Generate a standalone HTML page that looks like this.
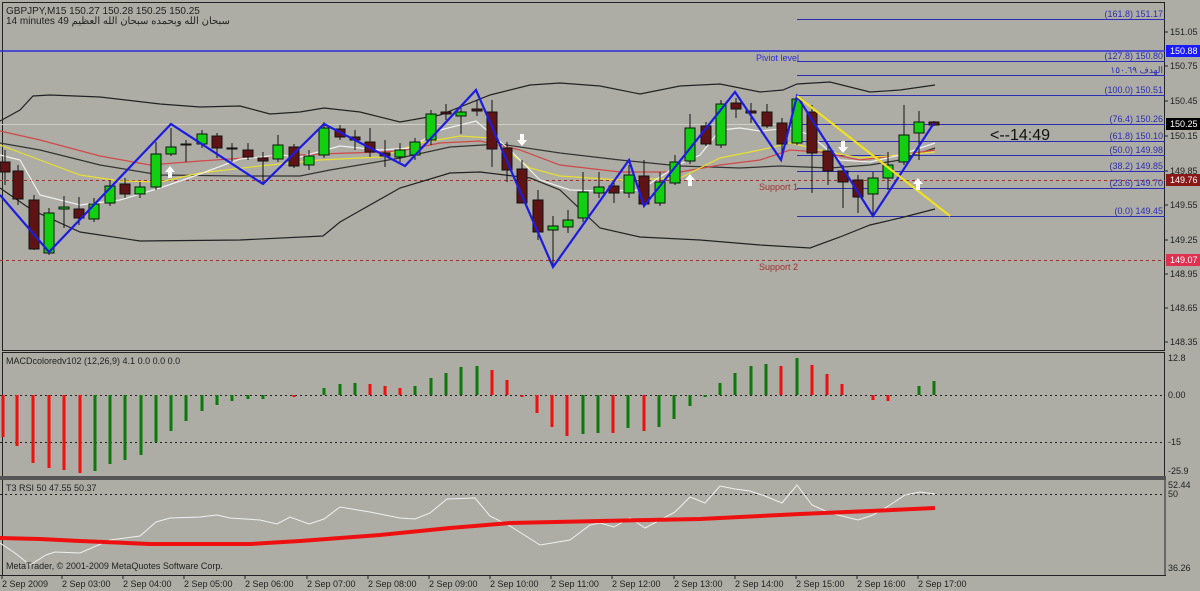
<!DOCTYPE html>
<html><head><meta charset="utf-8"><style>
html,body{margin:0;padding:0;background:#adada5;}
svg{display:block;font-family:"Liberation Sans","Noto Sans CJK SC",sans-serif;}
</style></head><body>
<svg width="1200" height="591" viewBox="0 0 1200 591" xmlns="http://www.w3.org/2000/svg">
<rect width="1200" height="591" fill="#adada5"/>
<!-- frames -->
<rect x="2.5" y="2.5" width="1162" height="348" fill="none" stroke="#222" stroke-width="1"/>
<rect x="2.5" y="352.5" width="1162" height="124" fill="none" stroke="#222" stroke-width="1"/>
<rect x="0" y="476" width="1166" height="4" fill="#555"/>
<line x1="2.5" y1="480" x2="2.5" y2="575" stroke="#222"/>
<line x1="1165" y1="480" x2="1165" y2="575" stroke="#222"/>
<line x1="0" y1="575.5" x2="1166" y2="575.5" stroke="#222"/>

<!-- header text -->
<text x="6" y="14" font-size="10" fill="#222">GBPJPY,M15  150.27 150.28 150.25 150.25</text>
<text x="6" y="24" font-size="10" fill="#222">14 minutes 49 سبحان الله وبحمده سبحان الله العظيم</text>

<!-- horizontal levels -->
<line x1="0" y1="51" x2="1165" y2="51" stroke="#2c2cdc" stroke-width="1.5"/>
<line x1="0" y1="124.5" x2="1165" y2="124.5" stroke="#cfcfc8" stroke-width="1"/>
<g stroke="#2c2cb4" stroke-width="1">
<line x1="797" y1="19.5" x2="1165" y2="19.5"/>
<line x1="797" y1="61.5" x2="1165" y2="61.5"/>
<line x1="797" y1="75.5" x2="1165" y2="75.5"/>
<line x1="797" y1="95.5" x2="1165" y2="95.5"/>
<line x1="797" y1="124.5" x2="1165" y2="124.5"/>
<line x1="797" y1="141.5" x2="1165" y2="141.5"/>
<line x1="797" y1="155.5" x2="1165" y2="155.5"/>
<line x1="797" y1="171.5" x2="1165" y2="171.5"/>
<line x1="797" y1="188.5" x2="1165" y2="188.5"/>
<line x1="797" y1="216.5" x2="1165" y2="216.5"/>
</g>
<g stroke="#a03030" stroke-width="1" stroke-dasharray="3,3">
<line x1="0" y1="180.5" x2="1165" y2="180.5"/>
<line x1="0" y1="260.5" x2="1165" y2="260.5"/>
</g>
<g font-size="9" fill="#2c2cb4" text-anchor="end">
<text x="1163" y="17">(161.8) 151.17</text>
<text x="1163" y="59">(127.8) 150.80</text>
<text x="1163" y="73">الهدف ١٥٠.٦٩</text>
<text x="1163" y="93">(100.0)  150.51</text>
<text x="1163" y="122">(76.4) 150.26</text>
<text x="1163" y="139">(61.8) 150.10</text>
<text x="1163" y="153">(50.0)  149.98</text>
<text x="1163" y="169">(38.2)  149.85</text>
<text x="1163" y="186">(23.6)  149.70</text>
<text x="1163" y="214">(0.0)  149.45</text>
</g>
<text x="756" y="61" font-size="9" fill="#2c2cdc">Piviot level</text>
<text x="759" y="190" font-size="9" fill="#a03030">Support 1</text>
<text x="759" y="270" font-size="9" fill="#a03030">Support 2</text>
<text x="990" y="140" font-size="16" fill="#111">&lt;--14:49</text>

<!-- bands & MAs -->
<g fill="none" stroke-width="1.2">
<polyline stroke="#222" points="0,121 20,110 33,96 50,95 100,97 160,104 200,107 240,106 270,114 300,112 324,108 360,112 400,122 440,115 490,95 530,85 560,83 600,86 640,94 680,86 720,84 760,92 783,90 797,84 830,82 870,92 900,90 935,85"/>
<polyline stroke="#222" points="0,188 32,210 80,232 140,241 240,240 323,236 340,222 400,188 450,173 480,172 530,178 560,190 600,228 640,237 700,240 760,245 810,248 840,237 870,225 900,218 935,209"/>
<polyline stroke="#333" points="0,143 40,150 100,165 160,175 240,176 300,176 330,170 400,158 450,147 500,144 560,153 620,160 680,166 740,168 780,166 830,168 870,165 900,160 935,148"/>
<polyline stroke="#d04848" points="0,131 40,140 100,156 150,165 200,161 260,157 320,154 380,152 400,151 440,143 480,141 520,150 560,165 620,172 680,172 720,165 760,160 790,150 820,152 860,160 900,155 935,150"/>
<polyline stroke="#e8e030" points="0,145 40,160 80,175 120,181 160,182 200,173 260,166 320,160 380,157 420,143 460,136 490,138 530,168 560,176 620,180 680,178 720,158 760,150 790,143 820,150 860,158 900,155 935,152"/>
<polyline stroke="#f0f0f0" points="0,155 20,160 40,195 80,205 120,200 160,188 200,174 240,159 280,155 300,157 340,146 380,150 410,148 440,130 476,121 510,150 540,180 570,190 600,191 640,190 680,164 700,155 720,130 740,128 760,131 790,128 810,135 840,160 870,162 900,155 935,143"/>
</g>

<!-- candles -->
<g stroke="#111" stroke-width="1">
<g stroke="#111">
<line x1="5" y1="150" x2="5" y2="185"/><line x1="18" y1="165" x2="18" y2="205"/><line x1="34" y1="195" x2="34" y2="250"/><line x1="49" y1="208" x2="49" y2="255"/><line x1="64" y1="196" x2="64" y2="228"/><line x1="79" y1="197" x2="79" y2="225"/><line x1="94" y1="198" x2="94" y2="222"/><line x1="110" y1="180" x2="110" y2="206"/><line x1="125" y1="178" x2="125" y2="198"/><line x1="140" y1="182" x2="140" y2="198"/><line x1="156" y1="142" x2="156" y2="190"/><line x1="171" y1="128" x2="171" y2="156"/><line x1="186" y1="140" x2="186" y2="162"/><line x1="202" y1="130" x2="202" y2="148"/><line x1="217" y1="133" x2="217" y2="158"/><line x1="232" y1="143" x2="232" y2="162"/><line x1="248" y1="143" x2="248" y2="160"/><line x1="263" y1="152" x2="263" y2="183"/><line x1="278" y1="135" x2="278" y2="162"/><line x1="294" y1="144" x2="294" y2="168"/><line x1="309" y1="150" x2="309" y2="170"/><line x1="324" y1="122" x2="324" y2="158"/><line x1="340" y1="125" x2="340" y2="140"/><line x1="355" y1="130" x2="355" y2="150"/><line x1="370" y1="128" x2="370" y2="157"/><line x1="385" y1="140" x2="385" y2="167"/><line x1="400" y1="143" x2="400" y2="162"/><line x1="415" y1="138" x2="415" y2="160"/><line x1="431" y1="110" x2="431" y2="145"/><line x1="446" y1="104" x2="446" y2="120"/><line x1="461" y1="105" x2="461" y2="134"/><line x1="477" y1="100" x2="477" y2="116"/><line x1="492" y1="100" x2="492" y2="167"/><line x1="507" y1="142" x2="507" y2="182"/><line x1="522" y1="160" x2="522" y2="203"/><line x1="538" y1="190" x2="538" y2="240"/><line x1="553" y1="216" x2="553" y2="267"/><line x1="568" y1="210" x2="568" y2="233"/><line x1="583" y1="172" x2="583" y2="222"/><line x1="599" y1="172" x2="599" y2="198"/><line x1="614" y1="180" x2="614" y2="203"/><line x1="629" y1="165" x2="629" y2="198"/><line x1="644" y1="160" x2="644" y2="207"/><line x1="660" y1="172" x2="660" y2="206"/><line x1="675" y1="155" x2="675" y2="185"/><line x1="690" y1="114" x2="690" y2="164"/><line x1="706" y1="122" x2="706" y2="146"/><line x1="721" y1="100" x2="721" y2="148"/><line x1="736" y1="98" x2="736" y2="118"/><line x1="751" y1="103" x2="751" y2="123"/><line x1="767" y1="104" x2="767" y2="128"/><line x1="782" y1="118" x2="782" y2="158"/><line x1="797" y1="96" x2="797" y2="145"/><line x1="812" y1="105" x2="812" y2="193"/><line x1="828" y1="145" x2="828" y2="185"/><line x1="843" y1="165" x2="843" y2="208"/><line x1="858" y1="175" x2="858" y2="213"/><line x1="873" y1="172" x2="873" y2="216"/><line x1="888" y1="152" x2="888" y2="190"/><line x1="904" y1="105" x2="904" y2="165"/><line x1="919" y1="111" x2="919" y2="160"/><line x1="934" y1="121" x2="934" y2="126"/>
</g>
<g fill="#5e1414">
<rect x="0" y="162" width="10" height="10"/><rect x="13" y="171" width="10" height="28"/><rect x="29" y="200" width="10" height="49"/><rect x="74" y="209" width="10" height="9"/><rect x="120" y="184" width="10" height="10"/><rect x="212" y="136" width="10" height="12"/><rect x="243" y="150" width="10" height="7"/><rect x="258" y="158" width="10" height="3"/><rect x="289" y="147" width="10" height="19"/><rect x="335" y="129" width="10" height="8"/><rect x="350" y="137" width="10" height="3"/><rect x="365" y="142" width="10" height="10"/><rect x="380" y="153" width="10" height="3"/><rect x="441" y="112" width="10" height="2"/><rect x="472" y="109" width="10" height="2"/><rect x="487" y="112" width="10" height="37"/><rect x="502" y="148" width="10" height="22"/><rect x="517" y="169" width="10" height="34"/><rect x="533" y="200" width="10" height="32"/><rect x="609" y="186" width="10" height="7"/><rect x="639" y="176" width="10" height="28"/><rect x="701" y="126" width="10" height="18"/><rect x="731" y="103" width="10" height="6"/><rect x="746" y="111" width="10" height="2"/><rect x="762" y="112" width="10" height="14"/><rect x="777" y="123" width="10" height="21"/><rect x="807" y="112" width="10" height="41"/><rect x="823" y="151" width="10" height="20"/><rect x="838" y="171" width="10" height="11"/><rect x="853" y="180" width="10" height="17"/><rect x="929" y="122" width="10" height="3"/>
</g>
<g fill="#10d010">
<rect x="44" y="213" width="10" height="40"/><rect x="59" y="207" width="10" height="2"/><rect x="89" y="204" width="10" height="15"/><rect x="105" y="186" width="10" height="17"/><rect x="135" y="187" width="10" height="7"/><rect x="151" y="154" width="10" height="33"/><rect x="166" y="147" width="10" height="7"/><rect x="181" y="144" width="10" height="1"/><rect x="197" y="134" width="10" height="10"/><rect x="227" y="148" width="10" height="1"/><rect x="273" y="145" width="10" height="14"/><rect x="304" y="156" width="10" height="9"/><rect x="319" y="128" width="10" height="27"/><rect x="395" y="150" width="10" height="7"/><rect x="410" y="142" width="10" height="13"/><rect x="426" y="114" width="10" height="26"/><rect x="456" y="112" width="10" height="4"/><rect x="548" y="226" width="10" height="4"/><rect x="563" y="220" width="10" height="7"/><rect x="578" y="192" width="10" height="26"/><rect x="594" y="187" width="10" height="6"/><rect x="624" y="175" width="10" height="18"/><rect x="655" y="182" width="10" height="21"/><rect x="670" y="162" width="10" height="21"/><rect x="685" y="128" width="10" height="33"/><rect x="716" y="104" width="10" height="41"/><rect x="792" y="99" width="10" height="44"/><rect x="868" y="178" width="10" height="16"/><rect x="883" y="165" width="10" height="13"/><rect x="899" y="135" width="10" height="27"/><rect x="914" y="122" width="10" height="11"/>
</g>
</g>

<!-- zigzag & trend -->
<polyline fill="none" stroke="#1c1ce0" stroke-width="2.2" points="0,195 49,252 171,124 263,184 324,124 405,166 476,90 553,267 629,160 644,206 735,92 781,160 797,96 873,216 934,123"/>
<line x1="797" y1="96" x2="950" y2="216" stroke="#f0e020" stroke-width="2.2"/>

<!-- arrows -->
<g fill="#fff">
<path d="M170 166 l-5 6 h3 v6 h4 v-6 h3 z"/>
<path d="M690 174 l-5 6 h3 v6 h4 v-6 h3 z"/>
<path d="M918 178 l-5 6 h3 v6 h4 v-6 h3 z"/>
<path d="M522 146 l-5 -6 h3 v-6 h4 v6 h3 z"/>
<path d="M843 153 l-5 -6 h3 v-6 h4 v6 h3 z"/>
</g>

<!-- right price axis -->
<g font-size="9" fill="#222">
<text x="1170" y="35">151.05</text><text x="1170" y="69">150.75</text><text x="1170" y="104">150.45</text><text x="1170" y="139">150.15</text><text x="1170" y="174">149.85</text><text x="1170" y="208">149.55</text><text x="1170" y="243">149.25</text><text x="1170" y="277">148.95</text><text x="1170" y="311">148.65</text><text x="1170" y="345">148.35</text>
</g>
<g stroke="#222"><line x1="1165" y1="32" x2="1168" y2="32"/><line x1="1165" y1="66" x2="1168" y2="66"/><line x1="1165" y1="101" x2="1168" y2="101"/><line x1="1165" y1="136" x2="1168" y2="136"/><line x1="1165" y1="171" x2="1168" y2="171"/><line x1="1165" y1="205" x2="1168" y2="205"/><line x1="1165" y1="240" x2="1168" y2="240"/><line x1="1165" y1="274" x2="1168" y2="274"/><line x1="1165" y1="308" x2="1168" y2="308"/><line x1="1165" y1="342" x2="1168" y2="342"/></g>
<rect x="1166" y="45" width="34" height="12" fill="#1a1aff"/><text x="1170" y="54" font-size="9" fill="#fff">150.88</text>
<rect x="1166" y="118" width="34" height="12" fill="#000"/><text x="1170" y="127" font-size="9" fill="#fff">150.25</text>
<rect x="1166" y="174" width="34" height="12" fill="#8a1a1a"/><text x="1170" y="183" font-size="9" fill="#fff">149.76</text>
<rect x="1166" y="254" width="34" height="12" fill="#e03050"/><text x="1170" y="263" font-size="9" fill="#fff">149.07</text>

<!-- MACD -->
<text x="6" y="364" font-size="9" fill="#222">MACDcoloredv102 (12,26,9) 4.1 0.0 0.0 0.0</text>
<g stroke="#222" stroke-dasharray="2,3"><line x1="0" y1="395.5" x2="1165" y2="395.5"/><line x1="0" y1="442.5" x2="1165" y2="442.5"/></g>
<g font-size="9" fill="#222"><text x="1168" y="361">12.8</text><text x="1168" y="398">0.00</text><text x="1168" y="445">-15</text><text x="1168" y="474">-25.9</text></g>
<g stroke-width="3" stroke="#ee1010">
<line x1="3" y1="395" x2="3" y2="437"/><line x1="17" y1="395" x2="17" y2="446"/><line x1="33" y1="395" x2="33" y2="463"/><line x1="49" y1="395" x2="49" y2="468"/><line x1="64" y1="395" x2="64" y2="470"/><line x1="80" y1="395" x2="80" y2="473"/><line x1="294" y1="395" x2="294" y2="397"/><line x1="370" y1="395" x2="370" y2="384"/><line x1="385" y1="395" x2="385" y2="386"/><line x1="400" y1="395" x2="400" y2="388"/><line x1="492" y1="395" x2="492" y2="370"/><line x1="507" y1="395" x2="507" y2="380"/><line x1="522" y1="395" x2="522" y2="397"/><line x1="537" y1="395" x2="537" y2="413"/><line x1="552" y1="395" x2="552" y2="427"/><line x1="567" y1="395" x2="567" y2="436"/><line x1="613" y1="395" x2="613" y2="433"/><line x1="644" y1="395" x2="644" y2="431"/><line x1="781" y1="395" x2="781" y2="366"/><line x1="812" y1="395" x2="812" y2="365"/><line x1="827" y1="395" x2="827" y2="374"/><line x1="842" y1="395" x2="842" y2="384"/><line x1="873" y1="395" x2="873" y2="400"/><line x1="888" y1="395" x2="888" y2="401"/>
</g>
<g stroke-width="3" stroke="#0b7a0b">
<line x1="95" y1="395" x2="95" y2="471"/><line x1="110" y1="395" x2="110" y2="464"/><line x1="125" y1="395" x2="125" y2="460"/><line x1="141" y1="395" x2="141" y2="455"/><line x1="156" y1="395" x2="156" y2="442"/><line x1="171" y1="395" x2="171" y2="431"/><line x1="186" y1="395" x2="186" y2="421"/><line x1="202" y1="395" x2="202" y2="411"/><line x1="217" y1="395" x2="217" y2="405"/><line x1="232" y1="395" x2="232" y2="401"/><line x1="248" y1="395" x2="248" y2="399"/><line x1="263" y1="395" x2="263" y2="399"/><line x1="324" y1="395" x2="324" y2="388"/><line x1="340" y1="395" x2="340" y2="384"/><line x1="355" y1="395" x2="355" y2="383"/><line x1="415" y1="395" x2="415" y2="386"/><line x1="431" y1="395" x2="431" y2="378"/><line x1="446" y1="395" x2="446" y2="373"/><line x1="461" y1="395" x2="461" y2="367"/><line x1="477" y1="395" x2="477" y2="366"/><line x1="583" y1="395" x2="583" y2="434"/><line x1="598" y1="395" x2="598" y2="433"/><line x1="628" y1="395" x2="628" y2="428"/><line x1="659" y1="395" x2="659" y2="427"/><line x1="674" y1="395" x2="674" y2="419"/><line x1="690" y1="395" x2="690" y2="406"/><line x1="705" y1="395" x2="705" y2="397"/><line x1="720" y1="395" x2="720" y2="383"/><line x1="735" y1="395" x2="735" y2="373"/><line x1="751" y1="395" x2="751" y2="366"/><line x1="766" y1="395" x2="766" y2="364"/><line x1="797" y1="395" x2="797" y2="358"/><line x1="919" y1="395" x2="919" y2="386"/><line x1="934" y1="395" x2="934" y2="381"/>
</g>

<!-- RSI -->
<text x="6" y="491" font-size="9" fill="#222">T3 RSI 50 47.55 50.37</text>
<line x1="0" y1="494.5" x2="1165" y2="494.5" stroke="#222" stroke-dasharray="2,3"/>
<g font-size="9" fill="#222"><text x="1168" y="488">52.44</text><text x="1168" y="497">50</text><text x="1168" y="571">36.26</text></g>
<polyline fill="none" stroke="#f0f0f0" stroke-width="1" points="0,543 15,553 30,565 46,555 55,552 80,553 110,540 140,536 156,522 170,518 200,517 217,515 230,518 260,520 277,524 290,517 309,524 324,519 340,507 370,512 400,518 415,519 430,513 447,499 475,498 490,516 510,526 540,545 570,540 590,525 600,523 614,527 630,518 645,528 675,512 690,497 705,503 720,486 735,489 750,491 765,496 782,503 797,485 812,505 830,513 858,520 873,515 890,505 905,495 920,492 935,494"/>
<polyline fill="none" stroke="#ee1010" stroke-width="4" points="0,538 40,539 80,541 150,544 250,544 300,541 380,535 450,528 510,523 600,521 700,519 800,514 870,511 935,508"/>
<text x="6" y="569" font-size="9" fill="#222">MetaTrader, © 2001-2009 MetaQuotes Software Corp.</text>

<!-- time axis -->
<g font-size="9" fill="#222">
<text x="2" y="587">2 Sep 2009</text><text x="62" y="587">2 Sep 03:00</text><text x="123" y="587">2 Sep 04:00</text><text x="184" y="587">2 Sep 05:00</text><text x="245" y="587">2 Sep 06:00</text><text x="307" y="587">2 Sep 07:00</text><text x="368" y="587">2 Sep 08:00</text><text x="429" y="587">2 Sep 09:00</text><text x="490" y="587">2 Sep 10:00</text><text x="551" y="587">2 Sep 11:00</text><text x="612" y="587">2 Sep 12:00</text><text x="674" y="587">2 Sep 13:00</text><text x="735" y="587">2 Sep 14:00</text><text x="796" y="587">2 Sep 15:00</text><text x="857" y="587">2 Sep 16:00</text><text x="918" y="587">2 Sep 17:00</text>
</g>
<g stroke="#222"><line x1="2" y1="576" x2="2" y2="579"/><line x1="62" y1="576" x2="62" y2="579"/><line x1="123" y1="576" x2="123" y2="579"/><line x1="184" y1="576" x2="184" y2="579"/><line x1="245" y1="576" x2="245" y2="579"/><line x1="307" y1="576" x2="307" y2="579"/><line x1="368" y1="576" x2="368" y2="579"/><line x1="429" y1="576" x2="429" y2="579"/><line x1="490" y1="576" x2="490" y2="579"/><line x1="551" y1="576" x2="551" y2="579"/><line x1="612" y1="576" x2="612" y2="579"/><line x1="674" y1="576" x2="674" y2="579"/><line x1="735" y1="576" x2="735" y2="579"/><line x1="796" y1="576" x2="796" y2="579"/><line x1="857" y1="576" x2="857" y2="579"/><line x1="918" y1="576" x2="918" y2="579"/></g>
</svg>
</body></html>
